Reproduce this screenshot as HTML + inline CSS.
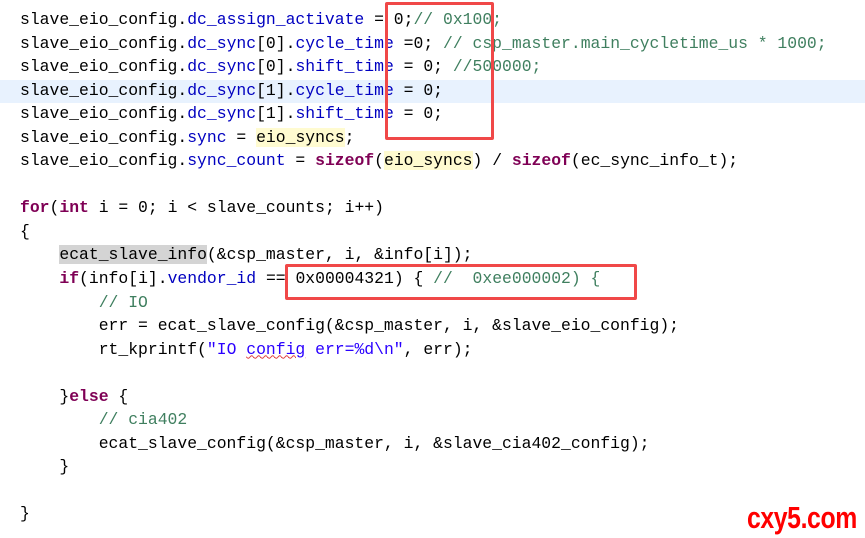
<!DOCTYPE html>
<html><head><meta charset="utf-8"><style>
body{margin:0;width:865px;height:538px;background:#fff;overflow:hidden;position:relative;font-family:"Liberation Mono",monospace;}
.code{position:absolute;left:20px;top:8px;font-size:16.4px;line-height:23.55px;color:#000;white-space:pre;}
.f{color:#0000c0}.k{color:#7f0055;font-weight:bold}.c{color:#3f7f5f}.s{color:#2a00ff}
.y{background:#fffbd0}.g{background:#d4d4d4}
.hl{position:absolute;left:0;top:80px;width:865px;height:23px;background:#e8f2fe}
.box{position:absolute;border:3px solid #f04848;border-radius:2px}
.wm{position:absolute;left:747px;top:500px;font-family:"Liberation Sans",sans-serif;font-weight:bold;font-size:31px;color:#f00;letter-spacing:-0.5px;transform:scaleX(0.8);transform-origin:0 0;white-space:nowrap}
.sq{text-decoration:underline wavy #e04040;text-decoration-thickness:1px}
</style></head><body>
<div class="hl"></div>
<div class="code">slave_eio_config.<span class="f">dc_assign_activate</span> = 0;<span class="c">// 0x100;</span>
slave_eio_config.<span class="f">dc_sync</span>[0].<span class="f">cycle_time</span> =0; <span class="c">// csp_master.main_cycletime_us * 1000;</span>
slave_eio_config.<span class="f">dc_sync</span>[0].<span class="f">shift_time</span> = 0; <span class="c">//500000;</span>
slave_eio_config.<span class="f">dc_sync</span>[1].<span class="f">cycle_time</span> = 0;
slave_eio_config.<span class="f">dc_sync</span>[1].<span class="f">shift_time</span> = 0;
slave_eio_config.<span class="f">sync</span> = <span class="y">eio_syncs</span>;
slave_eio_config.<span class="f">sync_count</span> = <span class="k">sizeof</span>(<span class="y">eio_syncs</span>) / <span class="k">sizeof</span>(ec_sync_info_t);

<span class="k">for</span>(<span class="k">int</span> i = 0; i &lt; slave_counts; i++)
{
    <span class="g">ecat_slave_info</span>(&amp;csp_master, i, &amp;info[i]);
    <span class="k">if</span>(info[i].<span class="f">vendor_id</span> == 0x00004321) { <span class="c">//  0xee000002) {</span>
        <span class="c">// IO</span>
        err = ecat_slave_config(&amp;csp_master, i, &amp;slave_eio_config);
        rt_kprintf(<span class="s">"IO <span class="sq">config</span> err=%d\n"</span>, err);

    }<span class="k">else</span> {
        <span class="c">// cia402</span>
        ecat_slave_config(&amp;csp_master, i, &amp;slave_cia402_config);
    }

}</div>
<div class="box" style="left:385px;top:2px;width:103px;height:132px"></div>
<div class="box" style="left:285px;top:264px;width:346px;height:30px"></div>
<div class="wm">cxy5.com</div>
</body></html>
